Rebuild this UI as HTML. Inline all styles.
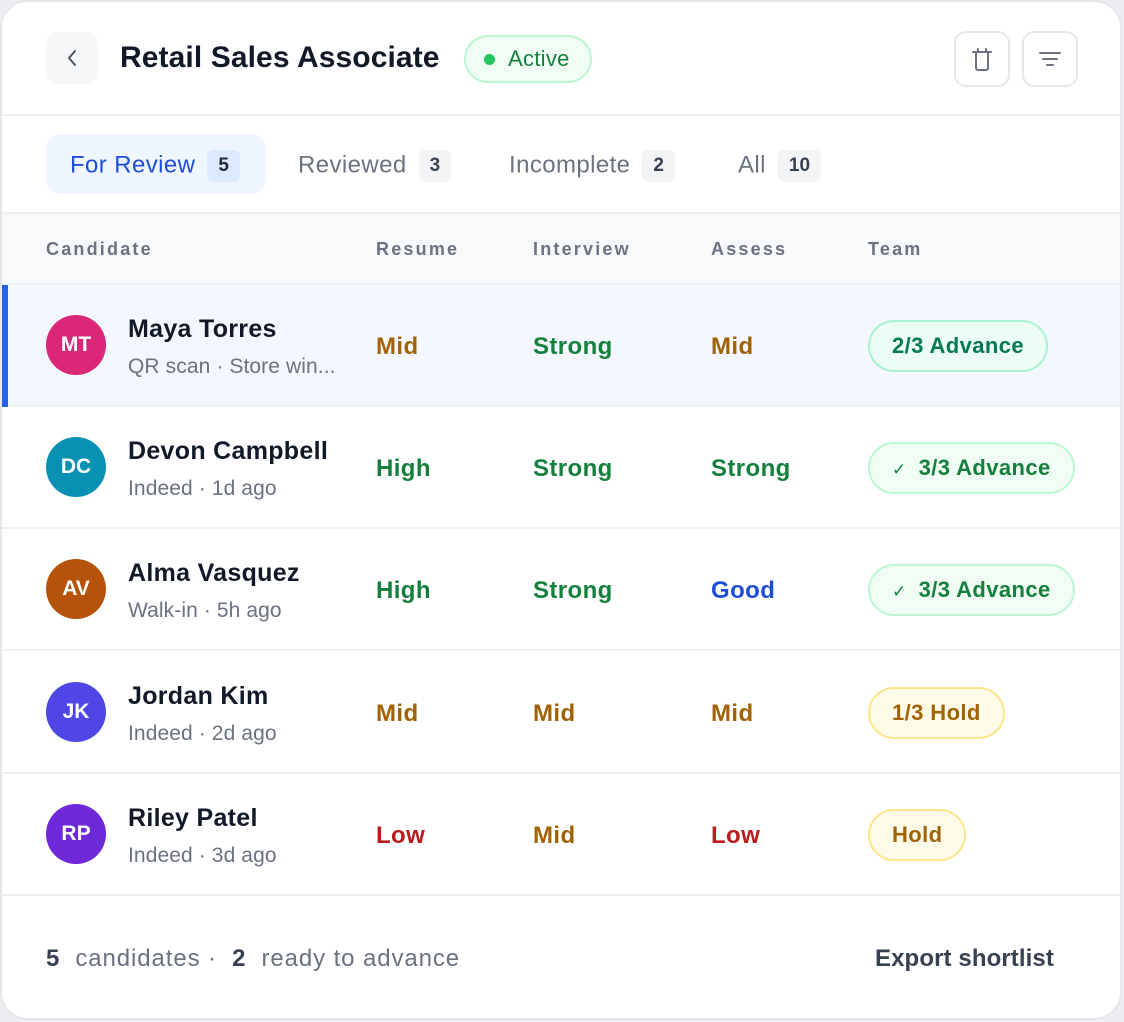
<!DOCTYPE html>
<html><head><meta charset="utf-8"><style>
*{box-sizing:border-box;margin:0;padding:0}
body{width:1124px;height:1022px;background:#eceef2;font-family:"Liberation Sans",Arial,sans-serif;position:relative;overflow:hidden}
.card{position:absolute;left:0;top:0;width:1122px;height:1020px;background:#fff;border:2px solid #e5e7eb;border-radius:28px;overflow:hidden}
.a{position:absolute;white-space:nowrap}
.hl{position:absolute;left:0;right:0;height:2px;background:#f0f1f3}
.back{left:44px;top:30px;width:52px;height:52px;background:#f6f7f9;border-radius:12px}
.title{left:118px;top:39px;font-size:30px;font-weight:bold;color:#111827;letter-spacing:0.1px}
.active{left:462px;top:33px;width:128px;height:48px;border:2px solid #bbf7d0;background:#f0fdf4;border-radius:24px;color:#15803d;font-size:22px;line-height:44px;padding-left:42px;letter-spacing:0.3px}
.active:before{content:"";position:absolute;left:18px;top:17px;width:11px;height:11px;border-radius:50%;background:#22c55e}
.ib{top:29px;width:56px;height:56px;border:2px solid #e5e7eb;border-radius:12px}
.tab{top:148px;font-size:24px;color:#6b7280;line-height:30px;letter-spacing:0.4px}
.cnt{display:inline-block;margin-left:12px;background:#f3f4f6;color:#374151;font-weight:bold;font-size:19px;border-radius:6px;padding:0 11px;line-height:32px;vertical-align:middle;letter-spacing:0}
.th{top:237px;font-size:18px;font-weight:bold;color:#6b7280;letter-spacing:2.2px}
.row{position:absolute;left:0;right:0;height:122px}
.av{position:absolute;left:44px;top:30px;width:60px;height:60px;border-radius:50%;color:#fff;font-weight:bold;font-size:21px;text-align:center;line-height:60px}
.nm{position:absolute;left:126px;top:30px;font-size:25px;font-weight:bold;color:#111827;letter-spacing:0.3px}
.sb{position:absolute;left:126px;top:70px;font-size:21px;color:#6b7280;letter-spacing:0.1px}
.sc{position:absolute;top:48px;font-size:24px;font-weight:bold;letter-spacing:0.4px}
.pill{position:absolute;left:866px;top:35px;height:52px;border-radius:26px;border:2px solid;font-size:22px;font-weight:bold;line-height:48px;padding:0 22px;letter-spacing:0.4px}
.g{color:#15803d}.y{color:#a16207}.r{color:#b91c1c}.b{color:#1d4ed8}
.pg{background:#f0fdf4;border-color:#bbf7d0;color:#15803d}
.pt{background:#ecfdf5;border-color:#a7f3d0;color:#047857}
.py{background:#fefce8;border-color:#fde68a;color:#a16207}
</style></head><body>
<div class="card">
<div class="a back"><svg width="52" height="52" viewBox="0 0 52 52"><path d="M29 19l-6 7 6 7" fill="none" stroke="#4b5563" stroke-width="2" stroke-linecap="round" stroke-linejoin="round"/></svg></div>
<div class="a title">Retail Sales Associate</div>
<div class="a active">Active</div>
<div class="a ib" style="left:952px"><svg width="52" height="52" viewBox="0 0 52 52"><path d="M17 19h18M20 19v16a2 2 0 0 0 2 2h8a2 2 0 0 0 2-2V19M22 19v-3M30 19v-3" fill="none" stroke="#6b7280" stroke-width="2" stroke-linecap="round"/></svg></div>
<div class="a ib" style="left:1020px"><svg width="52" height="52" viewBox="0 0 52 52"><path d="M16 20h20M19 26h14M23 32h6" fill="none" stroke="#6b7280" stroke-width="2" stroke-linecap="round"/></svg></div>
<div class="hl" style="top:112px"></div>
<div class="a" style="left:44px;top:132px;width:220px;height:60px;background:#eff6ff;border-radius:14px"></div>
<div class="a tab" style="left:68px;color:#1d4ed8">For Review<span class="cnt" style="background:#dbeafe;color:#1e293b">5</span></div>
<div class="a tab" style="left:296px">Reviewed<span class="cnt">3</span></div>
<div class="a tab" style="left:507px">Incomplete<span class="cnt">2</span></div>
<div class="a tab" style="left:736px">All<span class="cnt">10</span></div>
<div class="a" style="left:0;right:0;top:210px;height:73px;background:#f8f9fb;border-top:2px solid #eef0f2;border-bottom:2px solid #eef0f2"></div>
<div class="a th" style="left:44px">Candidate</div>
<div class="a th" style="left:374px">Resume</div>
<div class="a th" style="left:531px">Interview</div>
<div class="a th" style="left:709px">Assess</div>
<div class="a th" style="left:866px">Team</div>

<div class="row" style="top:283px;background:#f4f7fe;border-bottom:2px solid #eef0f2"><div class="a" style="left:0;top:0;width:6px;height:122px;background:#2563eb"></div>
<div class="av" style="background:#db2777">MT</div><div class="nm">Maya Torres</div><div class="sb">QR scan · Store win...</div>
<div class="sc y" style="left:374px">Mid</div><div class="sc g" style="left:531px">Strong</div><div class="sc y" style="left:709px">Mid</div>
<div class="pill pt">2/3 Advance</div></div>

<div class="row" style="top:405px;border-bottom:2px solid #eef0f2">
<div class="av" style="background:#0891b2">DC</div><div class="nm">Devon Campbell</div><div class="sb">Indeed · 1d ago</div>
<div class="sc g" style="left:374px">High</div><div class="sc g" style="left:531px">Strong</div><div class="sc g" style="left:709px">Strong</div>
<div class="pill pg"><span style="font-weight:normal;font-size:17px;margin-right:12px">✓</span>3/3 Advance</div></div>

<div class="row" style="top:527px;border-bottom:2px solid #eef0f2">
<div class="av" style="background:#b45309">AV</div><div class="nm">Alma Vasquez</div><div class="sb">Walk-in · 5h ago</div>
<div class="sc g" style="left:374px">High</div><div class="sc g" style="left:531px">Strong</div><div class="sc b" style="left:709px">Good</div>
<div class="pill pg"><span style="font-weight:normal;font-size:17px;margin-right:12px">✓</span>3/3 Advance</div></div>

<div class="row" style="top:650px;border-bottom:2px solid #eef0f2">
<div class="av" style="background:#4f46e5">JK</div><div class="nm">Jordan Kim</div><div class="sb">Indeed · 2d ago</div>
<div class="sc y" style="left:374px">Mid</div><div class="sc y" style="left:531px">Mid</div><div class="sc y" style="left:709px">Mid</div>
<div class="pill py">1/3 Hold</div></div>

<div class="row" style="top:772px;border-bottom:2px solid #eef0f2">
<div class="av" style="background:#6d28d9">RP</div><div class="nm">Riley Patel</div><div class="sb">Indeed · 3d ago</div>
<div class="sc r" style="left:374px">Low</div><div class="sc y" style="left:531px">Mid</div><div class="sc r" style="left:709px">Low</div>
<div class="pill py">Hold</div></div>

<div class="a" style="left:44px;top:943px;font-size:24px;color:#6b7280;letter-spacing:0.9px"><b style="color:#374151">5</b>&nbsp; candidates · &nbsp;<b style="color:#374151">2</b>&nbsp; ready to advance</div>
<div class="a" style="left:873px;top:943px;font-size:24px;font-weight:bold;color:#374151;letter-spacing:0.1px">Export shortlist</div>
</div>
</body></html>
